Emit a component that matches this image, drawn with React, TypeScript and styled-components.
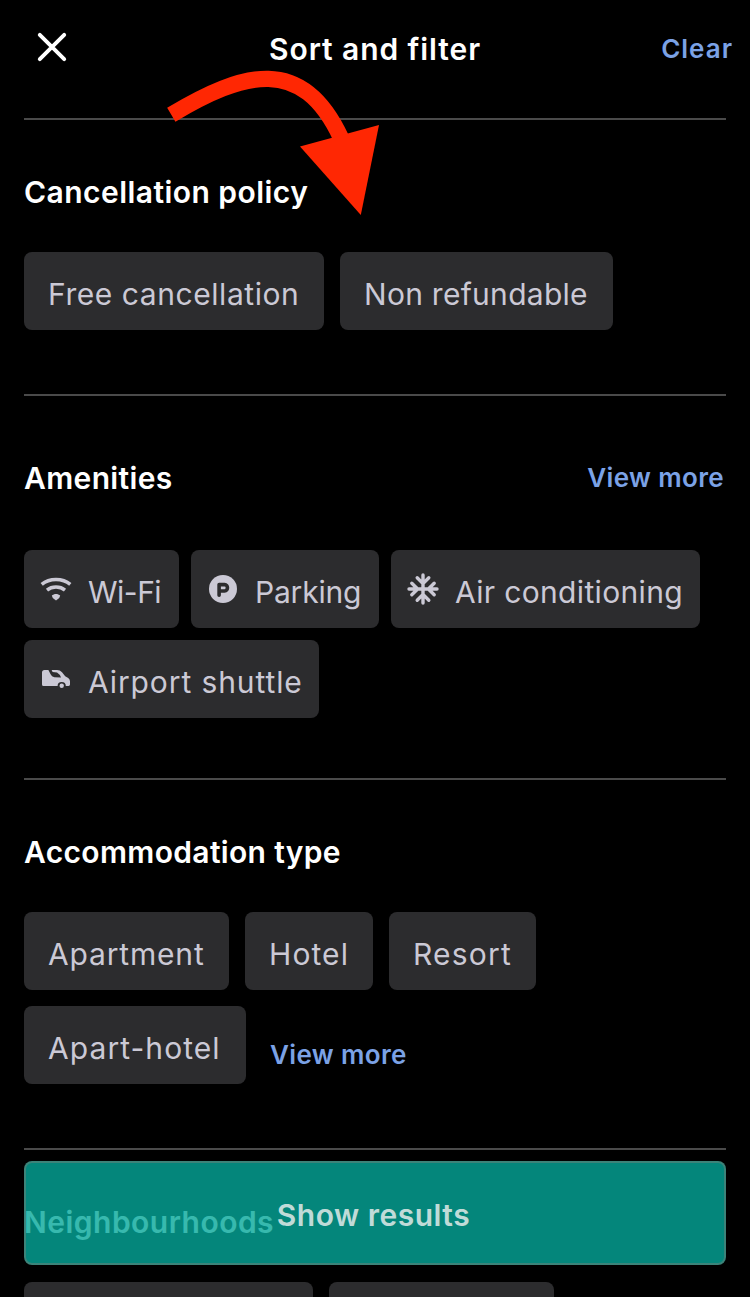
import React from 'react';
import styled, { createGlobalStyle } from 'styled-components';

const GlobalStyle = createGlobalStyle`
  * { box-sizing: border-box; }
  html, body { margin: 0; padding: 0; background: #000; }
  body { overflow: hidden; }
  button { font: inherit; border: 0; margin: 0; padding: 0; background: none; color: inherit; cursor: pointer; }
  h1, h2 { margin: 0; }
`;

const Screen = styled.main`
  position: relative;
  width: 750px;
  height: 1297px;
  overflow: hidden;
  background: #000;
  color: #fff;
  font-family: Inter, 'Liberation Sans', sans-serif;
  font-size: 30px;
`;

const Header = styled.header`
  display: grid;
  grid-template-columns: 1fr auto 1fr;
  align-items: start;
  height: 118px;
  padding: 29px 17px 0;
`;

const CloseButton = styled.button`
  display: flex;
  width: 32px;
  height: 36px;
  && { margin-left: 19px; }
  align-items: center;
  justify-content: center;
`;

const Title = styled.h1<{ $track?: number }>`
  font-size: 30px;
  font-weight: 600;
  line-height: 40px;
  white-space: nowrap;
  letter-spacing: ${({ $track = 0 }) => $track}px;
`;

const LinkButton = styled.button<{ $track?: number }>`
  && {
    justify-self: end;
    font-size: 26px;
    font-weight: 600;
    line-height: 40px;
    white-space: nowrap;
    color: #7ba2e6;
    letter-spacing: ${({ $track = 0.37 }) => $track}px;
  }
`;

const Divider = styled.hr`
  height: 2px;
  margin: 0 24px;
  border: 0;
  background: #4a4a4a;
`;

const Section = styled.section<{ $top: number; $bottom: number; $gap: number }>`
  display: flex;
  flex-direction: column;
  gap: ${({ $gap }) => $gap}px;
  padding: ${({ $top, $bottom }) => `${$top}px 24px ${$bottom}px`};
`;

const SectionHead = styled.div`
  display: flex;
  justify-content: space-between;
  height: 40px;
  padding-right: 2px;
`;

const Chips = styled.div<{ $gap: number }>`
  display: flex;
  flex-wrap: wrap;
  gap: ${({ $gap }) => $gap}px;
`;

const ChipButton = styled.button<{ $width: number; $icon: boolean }>`
  && {
    display: flex;
    flex: none;
    align-items: center;
    gap: 16px;
    width: ${({ $width }) => $width}px;
    height: 78px;
    padding-left: ${({ $icon }) => ($icon ? 16 : 24)}px;
    border-radius: 8px;
    background: #2c2c2e;
    color: #cbc9d5;
  }

  svg { flex: none; }
`;

const ChipLabel = styled.span<{ $track: number }>`
  padding-top: 6px;
  line-height: 40px;
  white-space: nowrap;
  letter-spacing: ${({ $track }) => $track}px;
`;

const MoreSlot = styled.div`
  display: flex;
  height: 78px;
  padding: 19px 0 0 8px;
  align-items: center;
`;

const ShowResults = styled.button`
  && {
    position: absolute;
    left: 24px;
    bottom: 32px;
    width: 702px;
    height: 104px;
    padding: 3px 3px 0 0;
    border: 2px solid rgba(128, 128, 120, 0.45);
    border-radius: 8px;
    background: rgba(5, 168, 154, 0.8);
    color: #c0dbd8;
    font-weight: 600;
    letter-spacing: 0.5px;
  }
`;

const Arrow = styled.svg`
  position: absolute;
  left: 160px;
  top: 60px;
  pointer-events: none;
`;

const WifiIcon = () => (
  <svg width="32" height="32" viewBox="0 0 32 32" fill="none" stroke="currentColor" strokeWidth="3.5">
    <path d="M1.7 11.4C9.5 4.7 22.5 4.7 30.3 11.4" />
    <path d="M7 17.1C12 13.1 20 13.1 25 17.1" />
    <path d="M11.8 22.6C14 20.4 18 20.4 20.2 22.6L19.2 25L16 27.4L12.8 25Z" fill="currentColor" stroke="none" />
  </svg>
);

const ParkingIcon = () => (
  <svg width="32" height="32" viewBox="0 0 32 32">
    <circle cx="16" cy="16" r="14" fill="currentColor" />
    <path
      d="M12.1 22.2V11.6H17.6C21.4 11.6 21.4 18 17.6 18H12.1"
      fill="none"
      stroke="#2c2c2e"
      strokeWidth="3.6"
      strokeLinecap="round"
      strokeLinejoin="round"
    />
  </svg>
);

const SnowIcon = () => (
  <svg width="32" height="32" viewBox="0 0 32 32" fill="none" stroke="currentColor" strokeWidth="3.4" strokeLinecap="round" strokeLinejoin="round">
    {[0, 90, 180, 270].map((angle) => (
      <path key={angle} transform={`rotate(${angle} 16 16)`} d="M16 16V2M10.2 4.8L16 10.6L21.8 4.8" />
    ))}
  </svg>
);

const ShuttleIcon = () => (
  <svg width="32" height="32" viewBox="0 0 32 32">
    <path
      fill="currentColor"
      fillRule="evenodd"
      d="M2 9.5Q2 7 4.5 7H8.4L10.6 11.3Q11.6 13.8 14.4 14.2L21 14.6Q20 11.4 17 9.6L12.6 9L11.6 7H17Q20 7 22 9.3L25.2 13.2L28.2 15Q30 16.2 30 18.2V21.6Q30 23 28.6 23H25.8A4.1 4.1 0 0 0 17.6 23H3.5Q2 23 2 21.5Z"
    />
    <circle cx="21.7" cy="22.8" r="2.2" fill="currentColor" />
  </svg>
);

type ChipData = { label?: string; width: number; track?: number; icon?: React.ReactNode };

const Chip = ({ label, width, track = 0, icon }: ChipData) => (
  <ChipButton $width={width} $icon={Boolean(icon)}>
    {icon}
    {label && <ChipLabel $track={track}>{label}</ChipLabel>}
  </ChipButton>
);

const policies: ChipData[] = [
  { label: 'Free cancellation', width: 300, track: 0.56 },
  { label: 'Non refundable', width: 273, track: 0.28 },
];

const amenities: ChipData[] = [
  { label: 'Wi-Fi', width: 155, track: -0.5, icon: <WifiIcon /> },
  { label: 'Parking', width: 188, track: -0.2, icon: <ParkingIcon /> },
  { label: 'Air conditioning', width: 309, track: 0.34, icon: <SnowIcon /> },
  { label: 'Airport shuttle', width: 295, track: 0.9, icon: <ShuttleIcon /> },
];

const types: ChipData[] = [
  { label: 'Apartment', width: 205, track: 0.83 },
  { label: 'Hotel', width: 128, track: 1.1 },
  { label: 'Resort', width: 147, track: 1.2 },
  { label: 'Apart-hotel', width: 222, track: 1.06 },
];

const areas: ChipData[] = [{ width: 289 }, { width: 225 }];

const renderChips = (items: ChipData[]) => items.map((item, i) => <Chip key={i} {...item} />);

export default function App() {
  return (
    <>
      <GlobalStyle />
      <Screen>
        <Header>
          <CloseButton aria-label="Close">
            <svg width="32" height="32" viewBox="0 0 32 32" stroke="#fff" strokeWidth="3.9" strokeLinecap="round">
              <path d="M3.8 3.8L28.2 28.2M28.2 3.8L3.8 28.2" />
            </svg>
          </CloseButton>
          <Title $track={0.92}>Sort and filter</Title>
          <LinkButton $track={1}>Clear</LinkButton>
        </Header>
        <Divider />
        <Section $top={52} $gap={40} $bottom={64}>
          <SectionHead><Title as="h2" $track={0.45}>Cancellation policy</Title></SectionHead>
          <Chips $gap={16}>{renderChips(policies)}</Chips>
        </Section>
        <Divider />
        <Section $top={62} $gap={52} $bottom={60}>
          <SectionHead>
            <Title as="h2" $track={0.36}>Amenities</Title>
            <LinkButton>View more</LinkButton>
          </SectionHead>
          <Chips $gap={12}>{renderChips(amenities)}</Chips>
        </Section>
        <Divider />
        <Section $top={52} $gap={40} $bottom={64}>
          <SectionHead><Title as="h2" $track={0.34}>Accommodation type</Title></SectionHead>
          <Chips $gap={16}>
            {renderChips(types)}
            <MoreSlot><LinkButton>View more</LinkButton></MoreSlot>
          </Chips>
        </Section>
        <Divider />
        <Section $top={52} $gap={40} $bottom={0}>
          <SectionHead><Title as="h2" $track={0.48}>Neighbourhoods</Title></SectionHead>
          <Chips $gap={16}>{renderChips(areas)}</Chips>
        </Section>
        <ShowResults>Show results</ShowResults>
        <Arrow width="230" height="165" viewBox="160 60 230 165">
          <path d="M171.3 114.7C243 72 302 54 341 138" fill="none" stroke="#ff2703" strokeWidth="16.2" />
          <path d="M300 146.5L379 125L360.8 215Z" fill="#ff2703" />
        </Arrow>
      </Screen>
    </>
  );
}
